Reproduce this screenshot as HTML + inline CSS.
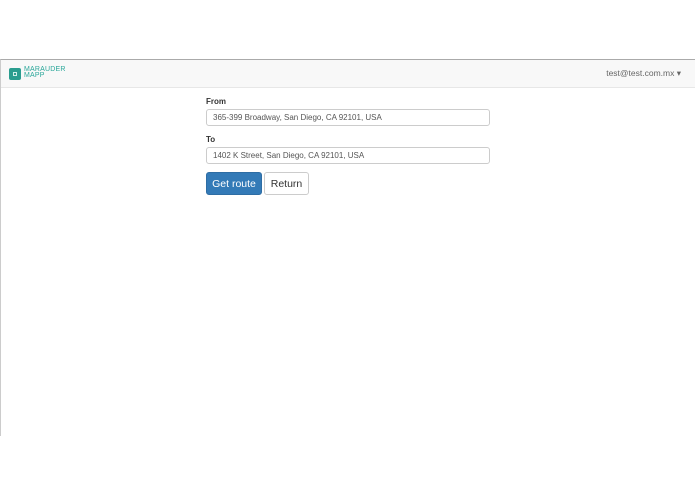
<!DOCTYPE html>
<html><head><style>
body{margin:0;width:695px;height:494px;background:#fff;font-family:"Liberation Sans",sans-serif;position:relative;overflow:hidden}
.frame{position:absolute;left:0;top:59px;width:695px;height:377px;border-top:1px solid #aaa;border-left:1px solid #ccc;box-sizing:border-box}
.nav{position:absolute;left:1px;top:60px;width:694px;height:27px;background:#f8f8f8;border-bottom:1px solid #e7e7e7}
.logo{position:absolute;left:9px;top:68px;width:12px;height:12px;background:#2a9d8f;border-radius:2px}
.logo:after{content:"";position:absolute;left:4px;top:4px;width:4px;height:4px;border:1px solid #cfeee9;box-sizing:border-box}
.lt{position:absolute;left:24px;top:67px;font-size:7px;line-height:6px;color:#2aa79a;letter-spacing:0.2px}
.user{position:absolute;right:14px;top:68px;font-size:8.5px;color:#666}
label{position:absolute;left:206px;font-size:8px;font-weight:bold;color:#333}
.in{position:absolute;left:206px;width:284px;height:17px;border:1px solid #ccc;border-radius:3px;box-sizing:border-box;font-size:8px;color:#555;padding-left:6px;line-height:15px}
.btn{position:absolute;top:172px;height:23px;border-radius:3px;box-sizing:border-box;font-size:10.5px;line-height:22px;text-align:center}
</style></head><body>
<div class="frame"></div>
<div class="nav"></div>
<div class="logo"></div>
<div class="lt">MARAUDER<br>MAPP</div>
<div class="user">test@test.com.mx ▾</div>
<label style="top:97px">From</label>
<div class="in" style="top:109px">365-399 Broadway, San Diego, CA 92101, USA</div>
<label style="top:135px">To</label>
<div class="in" style="top:147px">1402 K Street, San Diego, CA 92101, USA</div>
<div class="btn" style="left:206px;width:56px;background:#337ab7;border:1px solid #2e6da4;color:#fff">Get route</div>
<div class="btn" style="left:264px;width:45px;background:#fff;border:1px solid #ccc;color:#333">Return</div>
</body></html>
